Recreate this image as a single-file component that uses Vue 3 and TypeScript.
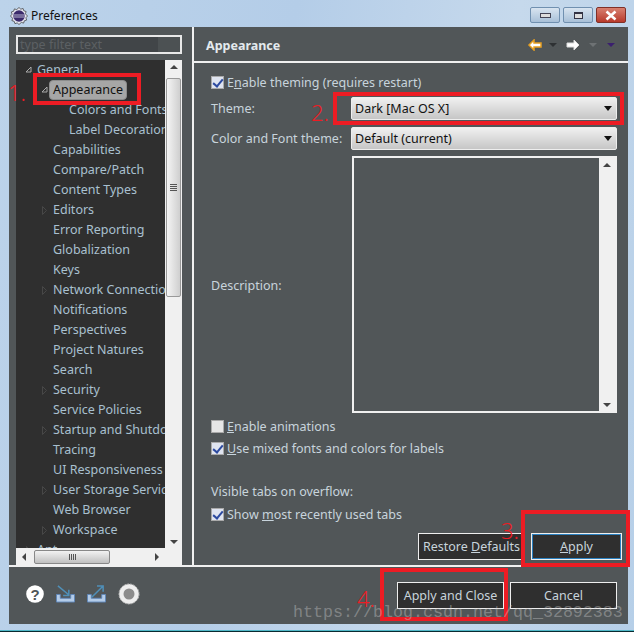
<script setup lang="ts">
interface TreeItem { label: string; level: number; arrow?: 'open' | 'closed' }
const items: TreeItem[] = [
  { label: 'General', level: 0, arrow: 'open' },
  { label: 'Appearance', level: 1, arrow: 'open' },
  { label: 'Colors and Fonts', level: 2 },
  { label: 'Label Decorations', level: 2 },
  { label: 'Capabilities', level: 1 },
  { label: 'Compare/Patch', level: 1 },
  { label: 'Content Types', level: 1 },
  { label: 'Editors', level: 1, arrow: 'closed' },
  { label: 'Error Reporting', level: 1 },
  { label: 'Globalization', level: 1 },
  { label: 'Keys', level: 1 },
  { label: 'Network Connections', level: 1, arrow: 'closed' },
  { label: 'Notifications', level: 1 },
  { label: 'Perspectives', level: 1 },
  { label: 'Project Natures', level: 1 },
  { label: 'Search', level: 1 },
  { label: 'Security', level: 1, arrow: 'closed' },
  { label: 'Service Policies', level: 1 },
  { label: 'Startup and Shutdown', level: 1, arrow: 'closed' },
  { label: 'Tracing', level: 1 },
  { label: 'UI Responsiveness', level: 1 },
  { label: 'User Storage Service', level: 1, arrow: 'closed' },
  { label: 'Web Browser', level: 1 },
  { label: 'Workspace', level: 1, arrow: 'closed' },
  { label: 'Ant', level: 0, arrow: 'closed' }
]
</script>

<template>
  <div class="window">
    <header class="titlebar">
      <svg class="appicon" width="18" height="18" viewBox="0 0 18 18">
        <path d="M9 .5l1.800 1.700 2.300-.7.7 2.300 2.300.7-.7 2.300L17.500 9l-1.600 1.800.7 2.300-2.300.7-.7 2.300-2.300-.7L9 17.500l-1.800-1.600-2.300.7-.7-2.300-2.300-.7.7-2.300L.5 9l1.600-1.800-.7-2.300 2.300-.7.7-2.300 2.300.7z" fill="#e8e8f0" stroke="#333" stroke-width=".7"/>
        <circle cx="9" cy="9" r="5.800" fill="#3b2a6b"/>
        <path d="M3.400 8h11.200M3.400 10h11.200" stroke="#d8d8e8" stroke-width=".8"/>
      </svg>
      <span class="title">Preferences</span>
      <div class="winbtns">
        <div class="winbtn"><i class="min"></i></div>
        <div class="winbtn"><i class="max"></i></div>
        <div class="winbtn close">
          <svg width="14" height="11" viewBox="0 0 14 11"><path d="M2.500 1.500l9 8M11.500 1.500l-9 8" stroke="#fff" stroke-width="2.600"/></svg>
        </div>
      </div>
    </header>

    <div class="client">
      <div class="main">
        <aside class="left">
          <div class="filter"><span>type filter text</span><i></i></div>
          <div class="treewrap">
            <div class="treecol">
              <div class="tree">
                <div v-for="it in items" :key="it.label" class="row" :class="'lv' + it.level">
                  <svg v-if="it.arrow === 'open'" class="arrow" width="7" height="7" viewBox="0 0 7 7"><path d="M6 1v5H1z" fill="none" stroke="#aaa" stroke-width="1"/></svg>
                  <svg v-else-if="it.arrow === 'closed'" class="arrow" width="7" height="9" viewBox="0 0 7 9"><path d="M1.500 .5l4 4-4 4z" fill="none" stroke="#474747" stroke-width="1"/></svg>
                  <span class="label" :class="{ sel: it.label === 'Appearance' }">{{ it.label }}</span>
                </div>
              </div>
              <div class="hbar">
                <span class="tri lt"></span>
                <div class="hthumb"><b></b><b></b><b></b><b></b></div>
                <span class="tri rt"></span>
              </div>
            </div>
            <div class="vbar">
              <span class="tri up"></span>
              <div class="vthumb"><b></b><b></b><b></b><b></b></div>
              <span class="tri dn"></span>
            </div>
          </div>
        </aside>

        <section class="right">
          <div class="pagehead">
            <strong>Appearance</strong>
            <div class="nav">
              <svg width="16" height="12" viewBox="0 0 16 12"><path d="M7 1L2 6l5 5V8h7V4H7z" fill="#fff" stroke="#e8a020" stroke-width="1.500"/></svg>
              <i class="dd first-dd"></i>
              <svg class="fwd" width="16" height="12" viewBox="0 0 16 12"><path d="M9 1l5 5-5 5V8H2V4h7z" fill="#fff" stroke="#ddd" stroke-width="1"/></svg>
              <i class="dd dim"></i>
              <i class="dd purple"></i>
            </div>
          </div>

          <div class="page">
            <label class="check first"><i class="box on"></i><span>E<u>n</u>able theming (requires restart)</span></label>
            <div class="formgrid">
              <span class="flabel">Theme:</span>
              <div class="combo"><span>Dark [Mac OS X]</span><i></i></div>
              <span class="flabel">Color and Font theme:</span>
              <div class="combo"><span>Default (current)</span><i></i></div>
              <span class="flabel">Description:</span>
              <div class="desc">
                <div class="dbar"><span class="tri up"></span><span class="tri dn"></span></div>
              </div>
            </div>
            <label class="check anim"><i class="box"></i><span><u>E</u>nable animations</span></label>
            <label class="check mixed"><i class="box on"></i><span><u>U</u>se mixed fonts and colors for labels</span></label>
            <div class="vis">Visible tabs on overflow:</div>
            <label class="check show"><i class="box on"></i><span>Show <u>m</u>ost recently used tabs</span></label>
            <div class="pagebtns">
              <button class="btn restore">Restore <u>D</u>efaults</button>
              <button class="btn apply"><u>A</u>pply</button>
            </div>
          </div>
        </section>
      </div>

      <footer class="footer">
        <div class="ficons">
          <svg width="18" height="18" viewBox="0 0 18 18"><circle cx="9" cy="9" r="8.800" fill="#fff"/><text x="9" y="14.500" text-anchor="middle" class="q">?</text></svg>
          <svg class="tray" width="21" height="18" viewBox="0 0 22 19"><path d="M1.500 10v8h19v-8h-4v4h-11v-4z" fill="#b4cce8" stroke="#5f86b8"/><path d="M3 1l11 9M14.500 5v6h-6" fill="none" stroke="#4f8fb8" stroke-width="1.600"/></svg>
          <svg width="21" height="18" viewBox="0 0 22 19"><path d="M1.500 10v8h19v-8h-4v4h-11v-4z" fill="#b4cce8" stroke="#5f86b8"/><path d="M6 13L18 1M11.500 1H18v6" fill="none" stroke="#4f8fb8" stroke-width="1.600"/></svg>
          <svg class="rec" width="22" height="22" viewBox="0 0 22 22"><circle cx="11" cy="11" r="10" fill="#eee" stroke="#bbb" stroke-dasharray="2 1"/><circle cx="11" cy="11" r="5.500" fill="#8c8c8c"/></svg>
        </div>
        <div class="fbtns">
          <button class="btn big">Apply and Close</button>
          <button class="btn big">Cancel</button>
        </div>
      </footer>
    </div>

    <!-- red hand-drawn annotations over the screenshot -->
    <div class="mark" style="left:33px;top:73px;width:108px;height:32px"></div>
    <div class="mark" style="left:333px;top:92px;width:291px;height:33px"></div>
    <div class="mark" style="left:521px;top:510px;width:109px;height:57px"></div>
    <div class="mark" style="left:380px;top:568px;width:128px;height:53px"></div>
    <span class="num" style="left:8px;top:81px">1.</span>
    <span class="num" style="left:311px;top:101px">2.</span>
    <span class="num" style="left:501px;top:519px">3.</span>
    <span class="num" style="left:357px;top:587px">4.</span>
    <span class="wm">https://blog.csdn.net/qq_32892383</span>
  </div>
</template>

<style>
html, body { margin: 0; padding: 0; background: #b8d0e8; overflow: hidden; }
</style>

<style scoped>
.window { position: relative; width: 634px; height: 632px; box-sizing: border-box; padding: 0 6px 7px 9px; border-bottom: 1px solid #0a2a30; box-shadow: inset 0 -1px #4fb8c8; background: linear-gradient(100deg, #bcd3ea 0%, #b4cde8 40%, #c6d9ec 70%, #b6cfe8 100%); font-family: "Noto Sans", Tahoma, sans-serif; font-size: 12.500px; overflow: hidden; display: flex; flex-direction: column; color: #c8d4dc; }
.titlebar { height: 27px; box-sizing: border-box; padding-top: 4px; display: flex; align-items: center; flex: none; }
.appicon { margin-left: 1px; margin-right: 3px; }
.title { color: #111; font-size: 12px; }
.winbtns { margin-left: auto; display: flex; gap: 3px; margin-top: -1px; margin-right: 2px; }
.winbtn { width: 30px; height: 16px; box-sizing: border-box; border: 1px solid #7090b0; border-radius: 2px; background: linear-gradient(#d8e4f0, #a8c0d8); display: flex; align-items: center; justify-content: center; }
.winbtn .min { width: 9px; height: 3px; background: #ddd; border: 1px solid #445; }
.winbtn .max { width: 7px; height: 4px; border: 1.500px solid #334; background: #ddd; border-top-width: 2px; }
.winbtn.close { background: linear-gradient(#d88070, #b83a2c); border-color: #803028; }
.client { flex: 1; display: flex; flex-direction: column; background: #515658; min-height: 0; }
.main { display: flex; flex: 1; min-height: 0; border-bottom: 2px solid #f0f0f0; }
.left { width: 183px; flex: none; border-right: 2px solid #f0f0f0; box-sizing: content-box; padding: 8px 0 0 0; display: flex; flex-direction: column; }
.filter { margin-left: 7px; width: 166px; height: 19px; flex: none; box-sizing: border-box; border: 2px solid #e8e8e8; background: #414548; display: flex; color: #5c6063; font-size: 12.500px; line-height: 15px; padding-left: 2px; position: relative; }
.filter i { position: absolute; right: 0; top: 0; bottom: 0; width: 22px; background: #4c5153; }
.treewrap { margin: 6px 0 0 7px; width: 166px; flex: 1; display: flex; min-height: 0; }
.treecol { width: 149px; display: flex; flex-direction: column; min-height: 0; }
.tree { flex: 1; background: #2f2f2f; overflow: hidden; min-height: 0; white-space: nowrap; }
.row { height: 20px; position: relative; display: flex; align-items: center; color: #a9c0d0; }
.row:first-child { margin-top: -1px; }
.row.lv0 { padding-left: 21px; }
.row.lv1 { padding-left: 37px; }
.row.lv2 { padding-left: 53px; }
.arrow { position: absolute; top: 7px; }
.lv0 .arrow { left: 9px; }
.lv1 .arrow { left: 25px; }
.label.sel { background: #a6a6a6; color: #111; border-radius: 4px; padding: 2px 3px; margin-left: -4px; margin-top: 2px; border: 1px solid #8c8c8c; line-height: 14px; }
.hbar { height: 17px; background: #f0f0f0; flex: none; display: flex; align-items: center; position: relative; }
.hthumb { margin-left: 18px; width: 76px; height: 14px; box-sizing: border-box; border: 1px solid #888; border-radius: 2px; background: linear-gradient(#f2f2f2, #c0c0c0); display: flex; justify-content: center; align-items: center; gap: 1px; }
.hthumb b { width: 1px; height: 6px; background: #555; }
.vbar { width: 17px; background: #f0f0f0; display: flex; flex-direction: column; align-items: center; position: relative; padding-top: 18px; box-sizing: border-box; }
.vthumb { width: 15px; height: 219px; box-sizing: border-box; border: 1px solid #999; border-radius: 2px; background: linear-gradient(90deg, #f4f4f4, #cfcfcf); display: flex; flex-direction: column; justify-content: center; align-items: center; gap: 1px; }
.vthumb b { width: 7px; height: 1px; background: #555; }
.tri { position: absolute; width: 0; height: 0; border: 4px solid transparent; }
.tri.up { top: 5px; left: 50%; margin-left: -4px; border-top: 0; border-bottom-color: #444; }
.tri.dn { bottom: 21px; left: 50%; margin-left: -4px; border-bottom: 0; border-top-color: #444; }
.tri.lt { left: 6px; top: 5px; border-left: 0; border-right-color: #444; }
.tri.rt { right: 6px; top: 5px; border-right: 0; border-left-color: #444; }
.right { flex: 1; min-width: 0; display: flex; flex-direction: column; }
.pagehead { height: 36px; flex: none; box-sizing: border-box; border-bottom: 2px solid #f0f0f0; display: flex; align-items: center; padding: 2px 13px 0 12px; color: #e4eaee; }
.pagehead strong { font-size: 12.500px; font-weight: 700; }
.nav { margin-left: auto; display: flex; align-items: center; }
.dd { width: 0; height: 0; border: 4px solid transparent; border-bottom: 0; border-top: 4px solid #2e3133; margin-left: 8px; }
.first-dd { margin-left: 6px; }
.fwd { margin-left: 8px; }
.dd.dim { border-top-color: #6e7274; }
.dd.purple { border-top-color: #3b1f6e; margin-left: 10px; }
.page { flex: 1; min-height: 0; padding: 0 11px 0 17px; display: flex; flex-direction: column; }
.check { display: flex; align-items: center; gap: 3px; height: 20px; flex: none; }
.box { width: 13px; height: 13px; box-sizing: border-box; border: 1px solid #aaa; background: #e6e6e6; position: relative; }
.box.on { background: #dfe4f0; }
.box.on::after { content: ""; position: absolute; left: 3px; top: 0; width: 4px; height: 8px; border: solid #2c4aa0; border-width: 0 2px 2px 0; transform: rotate(40deg); }
.first { margin-top: 9px; }
.formgrid { display: grid; grid-template-columns: 140px 1fr; row-gap: 7px; margin-top: 5px; align-items: center; }
.combo { height: 23px; box-sizing: border-box; border: 1px solid #eee; border-radius: 2px; background: linear-gradient(#f0f0f0, #c6c6c6); color: #111; display: flex; align-items: center; padding-left: 3px; justify-content: space-between; }
.combo i { width: 0; height: 0; border: 4px solid transparent; border-bottom: 0; border-top: 5px solid #111; margin-right: 4px; }
.desc { height: 257px; margin-top: -1px; margin-left: 1px; background: #515658; border: 2px solid #f0f0f0; box-sizing: border-box; display: flex; justify-content: flex-end; }
.dbar { width: 16px; background: #f0f0f0; position: relative; }
.dbar .tri.dn { bottom: 4px; }
.anim { margin-top: 3px; }
.mixed { margin-top: 2px; }
.vis { margin-top: 24px; height: 20px; line-height: 20px; flex: none; }
.show { margin-top: 2px; }
.pagebtns { margin-top: auto; margin-right: -5px; margin-bottom: 5px; display: flex; justify-content: flex-end; gap: 6px; }
.btn { font: inherit; color: #c8d4dc; background: #2f2f2f; border: 1px solid #eee; height: 27px; padding: 0; }
.btn.restore { width: 107px; }
.btn.apply { width: 91px; box-shadow: inset 0 0 0 1px #2a80c0; }
.footer { height: 57px; flex: none; display: flex; justify-content: space-between; padding: 15px 11px 0 17px; box-sizing: border-box; }
.ficons { display: flex; gap: 10px; align-items: flex-start; margin-top: 3px; }
.tray { margin-left: 1px; }
.rec { margin-top: -2px; margin-left: 1px; }
.q { font: 700 15px "Liberation Sans", sans-serif; fill: #515658; }
.fbtns { display: flex; gap: 6px; }
.btn.big { width: 107px; }
.mark { position: absolute; box-sizing: border-box; border: 4px solid #ed1c24; }
.num { position: absolute; color: #ed1c24; font: 300 22px "Noto Sans", sans-serif; line-height: 22px; }
.wm { position: absolute; left: 293px; top: 603px; font: 16.670px "Liberation Mono", monospace; color: rgba(205,205,205,.4); white-space: nowrap; }
</style>
